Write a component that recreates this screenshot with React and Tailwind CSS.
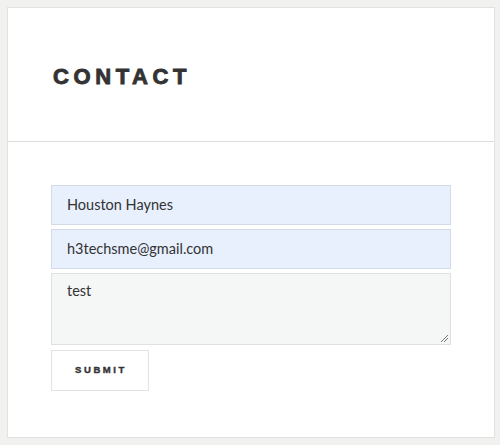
export default function App() {
  return (
    <div className="w-[500px] h-[445px] bg-[#f1f1ef] pt-[7px] pl-[7px]" style={{ fontFamily: 'Lato, "Open Sans", sans-serif' }}>
      <div className="w-[488px] h-[431px] bg-white border border-[#e2e2e0] flex flex-col">
        <div className="h-[134px] flex items-center pl-[45px] pt-[5px] border-b border-[#dcdcda]">
          <h1 className="text-[22px] leading-none font-bold tracking-[4.6px] text-[#333] [-webkit-text-stroke:0.9px_#333]" style={{ fontFamily: '"Liberation Sans", Arial, sans-serif' }}>
            CONTACT
          </h1>
        </div>
        <div className="flex flex-col pl-[43px] pt-[43px] gap-[4px]">
          <div className="w-[400px] h-[40px] bg-[#e8f0fe] border border-[#d3dbe6] flex items-center pl-[15px] text-[14.5px] text-[#333]">
            Houston Haynes
          </div>
          <div className="w-[400px] h-[40px] bg-[#e8f0fe] border border-[#d3dbe6] flex items-center pl-[15px] text-[14.5px] text-[#333]">
            h3techsme@gmail.com
          </div>
          <div className="relative w-[400px] h-[72px] bg-[#f5f6f6] border border-[#dfe0df] pl-[15px] pt-[6px] text-[14.5px] text-[#333]">
            test
            <svg className="absolute right-[1px] bottom-[1px]" width="9" height="9" viewBox="0 0 9 9">
              <line x1="1" y1="8" x2="8" y2="1" stroke="#777" strokeWidth="1" />
              <line x1="4" y1="8" x2="8" y2="4" stroke="#777" strokeWidth="1" />
            </svg>
          </div>
          <div className="mt-[1px] w-[98px] h-[41px] bg-white border border-[#e2e2e2] flex items-center justify-center">
            <span className="text-[9.5px] font-bold tracking-[2.6px] text-[#333] pl-[2px] [-webkit-text-stroke:0.4px_#333]" style={{ fontFamily: '"Liberation Sans", Arial, sans-serif' }}>
              SUBMIT
            </span>
          </div>
        </div>
      </div>
    </div>
  );
}
